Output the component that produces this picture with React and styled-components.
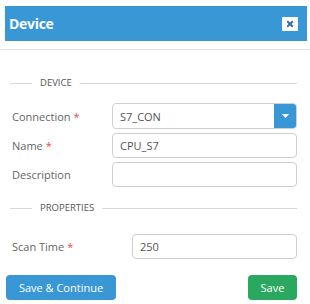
import React from 'react';
import styled, { createGlobalStyle } from 'styled-components';

const GlobalStyle = createGlobalStyle`
  body {
    margin: 0;
    background: #fff;
    font-family: "Open Sans", "Noto Sans", sans-serif;
  }
`;

const Modal = styled.div`
  width: 310px;
  height: 304px;
  box-sizing: border-box;
  padding-top: 6px;
`;

const Header = styled.div`
  margin: 0 3px 0 5px;
  height: 35px;
  background: #3a97d6;
  display: flex;
  align-items: center;
  justify-content: space-between;
  padding: 0 9px 0 4px;
`;

const Title = styled.h3`
  margin: 0;
  color: #fff;
  font-size: 14px;
  font-weight: 700;
  letter-spacing: -0.3px;
`;

const CloseButton = styled.button`
  width: 16px;
  height: 14px;
  padding: 0;
  border: none;
  border-radius: 1px;
  background: #fff;
  display: flex;
  align-items: center;
  justify-content: center;
  cursor: pointer;
`;

const Divider = styled.div`
  height: 1px;
  background: #e3e3e3;
  margin-top: 8px;
`;

const Body = styled.div`
  padding: 0 13px 0 10px;
`;

const SectionTitle = styled.div`
  display: flex;
  align-items: center;
  gap: 8px;
  margin-top: ${(p) => p.$top}px;
  font-size: 9.5px;
  color: #555;
  text-transform: uppercase;
  line-height: 12px;

  &::before {
    content: '';
    width: 22px;
    height: 1px;
    background: #d8d8d8;
  }

  &::after {
    content: '';
    flex: 1;
    height: 1px;
    background: #d8d8d8;
  }
`;

const Fields = styled.div`
  display: flex;
  flex-direction: column;
  gap: 4px;
  margin-top: ${(p) => p.$top}px;
`;

const Row = styled.div`
  display: grid;
  grid-template-columns: ${(p) => p.$label}px 1fr;
  align-items: center;
  padding-left: 2px;
`;

const Label = styled.label`
  font-size: 11px;
  color: #666;
`;

const Required = styled.span`
  color: #e74c3c;
  margin-left: 3px;
`;

const Input = styled.input`
  box-sizing: border-box;
  height: 25px;
  width: 100%;
  border: 1px solid #cfcfcf;
  border-radius: 4px;
  padding: 0 7px;
  font-family: inherit;
  font-size: 11px;
  color: #555;
  outline: none;
`;

const Select = styled.div`
  box-sizing: border-box;
  height: 26px;
  border: 1px solid #cfcfcf;
  border-radius: 4px;
  display: flex;
  align-items: stretch;
  overflow: hidden;
`;

const SelectValue = styled.div`
  flex: 1;
  display: flex;
  align-items: center;
  padding-left: 7px;
  font-size: 11px;
  color: #555;
`;

const SelectArrow = styled.div`
  width: 23px;
  margin: -1px -1px -1px 0;
  background: #3a97d6;
  display: flex;
  align-items: center;
  justify-content: center;
`;

const Footer = styled.div`
  display: flex;
  justify-content: space-between;
  margin: 16px 13px 0 6px;
`;

const Button = styled.button`
  height: 25px;
  width: ${(p) => p.$w}px;
  padding: 0;
  border: none;
  border-radius: 4px;
  background: ${(p) => p.$bg};
  color: #fff;
  font-family: inherit;
  font-size: 11px;
  cursor: pointer;
`;

const App = () => (
  <>
    <GlobalStyle />
    <Modal>
      <Header>
        <Title>Device</Title>
        <CloseButton>
          <svg width="8" height="8" viewBox="0 0 8 8">
            <path d="M1.2 1.2L6.8 6.8M6.8 1.2L1.2 6.8" stroke="#3a6d99" strokeWidth="2" />
          </svg>
        </CloseButton>
      </Header>
      <Divider />
      <Body>
        <SectionTitle $top={27}>Device</SectionTitle>
        <Fields $top={14}>
          <Row $label={100}>
            <Label>Connection<Required>*</Required></Label>
            <Select>
              <SelectValue>S7_CON</SelectValue>
              <SelectArrow>
                <svg width="7" height="4" viewBox="0 0 7 4">
                  <path d="M0 0H7L3.5 4Z" fill="#fff" />
                </svg>
              </SelectArrow>
            </Select>
          </Row>
          <Row $label={100}>
            <Label>Name<Required>*</Required></Label>
            <Input defaultValue="CPU_S7" />
          </Row>
          <Row $label={100}>
            <Label>Description</Label>
            <Input defaultValue="" />
          </Row>
        </Fields>
        <SectionTitle $top={15}>Properties</SectionTitle>
        <Fields $top={20}>
          <Row $label={120}>
            <Label>Scan Time<Required>*</Required></Label>
            <Input defaultValue="250" />
          </Row>
        </Fields>
      </Body>
      <Footer>
        <Button $bg="#3a97d6" $w={110}>Save &amp; Continue</Button>
        <Button $bg="#2aa85f" $w={49}>Save</Button>
      </Footer>
    </Modal>
  </>
);

export default App;
